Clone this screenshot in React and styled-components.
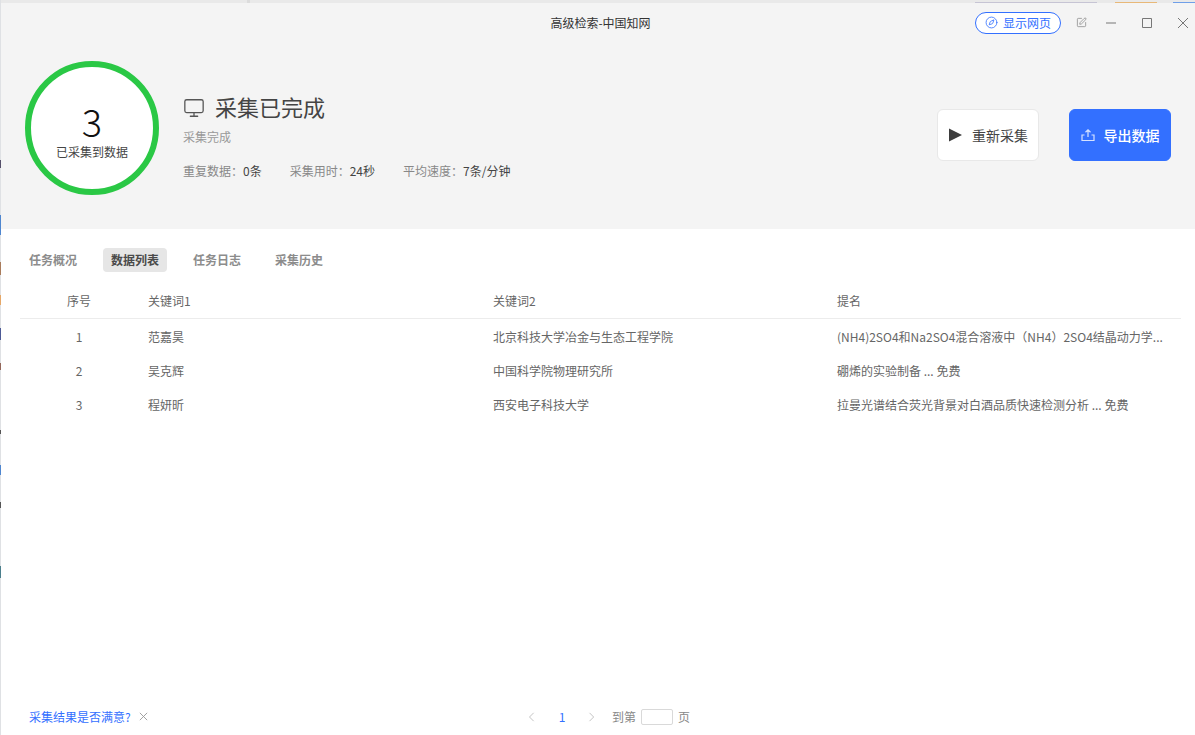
import React from 'react';
import styled, { createGlobalStyle } from 'styled-components';
import { Compass, Monitor, SquarePen } from 'lucide-react';

const GlobalStyle = createGlobalStyle`
  html, body {
    margin: 0;
    height: 100%;
    background: #fff;
    font-family: "Noto Sans CJK SC", "Noto Sans", sans-serif;
  }
  #root {
    height: 100%;
  }
`;

const Page = styled.div`
  width: 1195px;
  height: 735px;
  display: flex;
  overflow: hidden;
`;

// bits of the window behind that show along the left edge
const LeftEdge = styled.div`
  width: 1px;
  flex: none;
  background: linear-gradient(
    to bottom,
    #dfe1e4 0 160px, #55506a 160px 168px, #dfe1e4 168px 215px,
    #4f86cf 215px 235px, #dfe1e4 235px 262px, #a97c5c 262px 275px,
    #dfe1e4 275px 295px, #e5a768 295px 305px, #dfe1e4 305px 328px,
    #4d5a96 328px 340px, #dfe1e4 340px 363px, #93675a 363px 370px,
    #dfe1e4 370px 430px, #555 430px 434px, #dfe1e4 434px 465px,
    #4f86cf 465px 475px, #dfe1e4 475px 502px, #555 502px 508px,
    #dfe1e4 508px 566px, #4b7f8c 566px 578px, #dfe1e4 578px
  );
`;

const Main = styled.div`
  flex: 1;
  min-width: 0;
  display: flex;
  flex-direction: column;
`;

const TopEdge = styled.div`
  height: 3px;
  flex: none;
  display: flex;
  align-items: flex-end;
  background: #e9e9e9;
`;

const EdgeMark = styled.span`
  flex: none;
  width: ${(p) => p.$width}px;
  margin-left: ${(p) => p.$gap}px;
  height: ${(p) => p.$tall ? 3 : 1}px;
  background: ${(p) => p.$color};
`;

const Header = styled.header`
  height: 226px;
  flex: none;
  background: #f4f4f4;
  display: flex;
  flex-direction: column;
`;

const TitleBar = styled.div`
  height: 39px;
  display: flex;
  align-items: center;
  flex: none;
`;

const WindowTitle = styled.div`
  width: 974px;
  flex: none;
  padding-left: 225px;
  box-sizing: border-box;
  text-align: center;
  font-size: 12px;
  color: #333;
`;

const WebButton = styled.button`
  width: 86px;
  height: 22px;
  flex: none;
  box-sizing: border-box;
  border: 1px solid #3370ff;
  border-radius: 11px;
  background: #fff;
  color: #3370ff;
  font: inherit;
  font-size: 12px;
  padding: 0;
  display: flex;
  align-items: center;
  justify-content: center;
  gap: 5px;
`;

const WindowControls = styled.div`
  display: flex;
  align-items: center;
  gap: 16px;
  margin-left: 10px;
  color: #777;
`;

const ControlSlot = styled.span`
  width: 20px;
  height: 20px;
  display: flex;
  align-items: center;
  justify-content: center;
  &:first-child {
    margin-right: -6px;
  }
`;

const Summary = styled.div`
  display: flex;
  align-items: center;
  padding: 19px 24px 0 24px;
`;

const Ring = styled.div`
  width: 134px;
  height: 134px;
  box-sizing: border-box;
  border: 6px solid #2ac845;
  border-radius: 50%;
  background: #fff;
  display: flex;
  flex-direction: column;
  align-items: center;
  flex: none;
`;

const RingCount = styled.div`
  margin-top: 31px;
  font-size: 38px;
  line-height: 45px;
  color: #111;
  font-weight: 300;
`;

const RingLabel = styled.div`
  font-size: 12px;
  line-height: 18px;
  color: #444;
`;

const Info = styled.div`
  margin: 14px 0 0 24px;
  flex: 1;
`;

const StatusRow = styled.div`
  display: flex;
  align-items: center;
  gap: 10px;
  height: 32px;
  font-size: 22px;
  color: #444;
`;

const StatusIcon = styled(Monitor)`
  margin-top: 4px;
  color: #555;
`;

const StatusNote = styled.div`
  margin-top: 6px;
  font-size: 12px;
  line-height: 18px;
  color: #999;
`;

const Stats = styled.div`
  margin-top: 16px;
  display: flex;
  gap: 28px;
  font-size: 12px;
  line-height: 18px;
  color: #888;
`;

const StatValue = styled.span`
  color: #444;
`;

const ActionButton = styled.button`
  width: 102px;
  height: 52px;
  box-sizing: border-box;
  border: 1px solid ${(p) => (p.$primary ? '#3370ff' : '#e8e8e8')};
  border-radius: 6px;
  background: ${(p) => (p.$primary ? '#3370ff' : '#fff')};
  color: ${(p) => (p.$primary ? '#fff' : '#444')};
  font: inherit;
  font-size: 14px;
  font-weight: ${(p) => (p.$primary ? 500 : 400)};
  margin-top: 14px;
  margin-left: ${(p) => (p.$primary ? '30px' : '0')};
  padding: 0;
  display: flex;
  align-items: center;
  justify-content: center;
  gap: ${(p) => (p.$primary ? '9px' : '10px')};
`;

const Body = styled.main`
  flex: 1;
  display: flex;
  flex-direction: column;
  min-height: 0;
`;

const Tabs = styled.nav`
  display: flex;
  gap: 18px;
  padding: 19px 0 0 20px;
`;

const Tab = styled.span`
  padding: 0 8px;
  height: 24px;
  line-height: 24px;
  border-radius: 4px;
  font-size: 12px;
  font-weight: 600;
  color: ${(p) => (p.$active ? '#4a4a4a' : '#8c8c8c')};
  background: ${(p) => (p.$active ? '#e6e6e6' : 'transparent')};
`;

const Table = styled.div`
  margin: 11px 14px 0 19px;
  flex: 1;
`;

const Row = styled.div`
  display: grid;
  grid-template-columns: 120px 345px 344px 1fr;
  align-items: center;
  height: ${(p) => (p.$head ? '35px' : '34px')};
  font-size: 12px;
  color: #666;
  border-bottom: ${(p) => (p.$head ? '1px solid #ececec' : 'none')};
`;

const Cell = styled.div`
  padding-left: 8px;
  white-space: nowrap;
  overflow: hidden;
  text-overflow: ellipsis;
`;

const IndexCell = styled.div`
  text-align: center;
  padding-right: 2px;
`;

const Footer = styled.footer`
  height: 36px;
  flex: none;
  display: flex;
  align-items: center;
  padding: 0 0 1px 28px;
  box-sizing: border-box;
  font-size: 12px;
`;

const Feedback = styled.div`
  width: 498px;
  display: flex;
  align-items: center;
  gap: 7px;
  color: #3370ff;
`;

const DismissIcon = styled.span`
  display: flex;
  color: #999;
`;

const Pagination = styled.div`
  display: flex;
  align-items: center;
  color: #888;
`;

const PageArrow = styled.span`
  width: 10px;
  height: 12px;
  display: flex;
  color: #b8b8b8;
`;

const PageNumber = styled.span`
  width: 50px;
  text-align: center;
  color: #3370ff;
`;

const PageInput = styled.span`
  width: 32px;
  height: 16px;
  box-sizing: border-box;
  border: 1px solid #d9d9d9;
  border-radius: 2px;
  background: #fff;
  margin: 0 5px;
`;

const JumpLabel = styled.span`
  margin-left: 15px;
`;

const rows = [
  ['1', '范嘉昊', '北京科技大学冶金与生态工程学院', '(NH4)2SO4和Na2SO4混合溶液中（NH4）2SO4结晶动力学...'],
  ['2', '吴克辉', '中国科学院物理研究所', '硼烯的实验制备 ... 免费'],
  ['3', '程妍昕', '西安电子科技大学', '拉曼光谱结合荧光背景对白酒品质快速检测分析 ... 免费'],
];

const tabs = ['任务概况', '数据列表', '任务日志', '采集历史'];

const Line = ({ d, size = 12 }) => (
  <svg width={size} height={size} viewBox="0 0 12 12" fill="none" stroke="currentColor" strokeWidth="1">
    <path d={d} />
  </svg>
);

const App = () => (
  <>
    <GlobalStyle />
    <Page>
      <LeftEdge />
      <Main>
        <TopEdge>
          <EdgeMark $gap={246} $width={3} $color="#dcdcdc" $tall />
          <EdgeMark $gap={725} $width={122} $color="#c6c4d4" />
          <EdgeMark $gap={18} $width={42} $color="#e8b878" />
          <EdgeMark $gap={16} $width={22} $color="#6f9fe8" />
        </TopEdge>
        <Header>
          <TitleBar>
            <WindowTitle>高级检索-中国知网</WindowTitle>
            <WebButton>
              <Compass size={13} strokeWidth={1.5} />
              显示网页
            </WebButton>
            <WindowControls>
              <ControlSlot>
                <SquarePen size={11} strokeWidth={1.4} />
              </ControlSlot>
              <ControlSlot>
                <Line d="M1 6h10" />
              </ControlSlot>
              <ControlSlot>
                <Line d="M1.5 1.5h9v9h-9z" />
              </ControlSlot>
              <ControlSlot>
                <Line d="M1 1l10 10M11 1L1 11" />
              </ControlSlot>
            </WindowControls>
          </TitleBar>
          <Summary>
            <Ring>
              <RingCount>3</RingCount>
              <RingLabel>已采集到数据</RingLabel>
            </Ring>
            <Info>
              <StatusRow>
                <StatusIcon size={22} strokeWidth={1.4} />
                采集已完成
              </StatusRow>
              <StatusNote>采集完成</StatusNote>
              <Stats>
                <span>重复数据：<StatValue>0条</StatValue></span>
                <span>采集用时：<StatValue>24秒</StatValue></span>
                <span>平均速度：<StatValue>7条/分钟</StatValue></span>
              </Stats>
            </Info>
            <ActionButton>
              <svg width="14" height="14" viewBox="0 0 14 14" fill="#3d3d3d">
                <path d="M1 0.5L14 7L1 13.5z" />
              </svg>
              重新采集
            </ActionButton>
            <ActionButton $primary>
              <svg width="14" height="14" viewBox="0 0 14 14" fill="none" stroke="#d6e2ff" strokeWidth="1.2">
                <path d="M7 9V2M4.5 4.2L7 1.8l2.5 2.4M3.5 7H1v5.5h12V7h-2.5" />
              </svg>
              导出数据
            </ActionButton>
          </Summary>
        </Header>
        <Body>
          <Tabs>
            {tabs.map((tab) => (
              <Tab key={tab} $active={tab === '数据列表'}>{tab}</Tab>
            ))}
          </Tabs>
          <Table>
            <Row $head>
              <IndexCell>序号</IndexCell>
              <Cell>关键词1</Cell>
              <Cell>关键词2</Cell>
              <Cell>提名</Cell>
            </Row>
            {rows.map((row) => (
              <Row key={row[0]}>
                <IndexCell>{row[0]}</IndexCell>
                <Cell>{row[1]}</Cell>
                <Cell>{row[2]}</Cell>
                <Cell>{row[3]}</Cell>
              </Row>
            ))}
          </Table>
          <Footer>
            <Feedback>
              采集结果是否满意?
              <DismissIcon>
                <Line d="M2 2l8 8M10 2l-8 8" size={11} />
              </DismissIcon>
            </Feedback>
            <Pagination>
              <PageArrow><Line d="M8 1L3 6l5 5" /></PageArrow>
              <PageNumber>1</PageNumber>
              <PageArrow><Line d="M3 1l5 5-5 5" /></PageArrow>
              <JumpLabel>到第</JumpLabel>
              <PageInput />
              <span>页</span>
            </Pagination>
          </Footer>
        </Body>
      </Main>
    </Page>
  </>
);

export default App;
